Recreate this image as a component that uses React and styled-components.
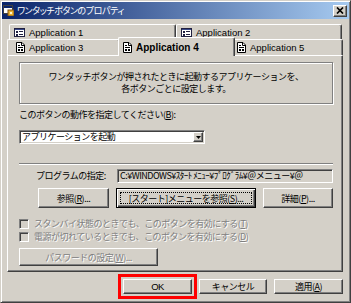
import React from 'react';
import styled, { createGlobalStyle, css } from 'styled-components';

const FACE = '#d4d0c8';
const jp = `"Noto Sans CJK JP", "Liberation Sans", sans-serif`;
const latin = `"Liberation Sans", Arial, sans-serif`;

const GlobalStyle = createGlobalStyle`
  html, body {
    margin: 0;
    padding: 0;
    background: ${FACE};
  }
  body {
    font-family: ${jp};
    font-size: 9px;
  }
`;

const raised = css`
  border: 1px solid;
  border-color: #fff #404040 #404040 #fff;
  box-shadow: inset -1px -1px #808080, inset 1px 1px ${FACE};
`;

const sunken = css`
  border: 1px solid;
  border-color: #808080 #fff #fff #808080;
  box-shadow: inset 1px 1px #404040, inset -1px -1px ${FACE};
`;

const Window = styled.div`
  box-sizing: border-box;
  width: 351px;
  height: 303px;
  background: ${FACE};
  border: 1px solid;
  border-color: ${FACE} #404040 #404040 ${FACE};
  box-shadow: inset 1px 1px #fff, inset -1px -1px #808080;
  padding: 1px;
  display: flex;
  flex-direction: column;
  overflow: hidden;
`;

const TitleBar = styled.div`
  height: 17px;
  flex: 0 0 17px;
  display: flex;
  align-items: center;
  padding: 0 2px 0 1px;
  background: linear-gradient(to right, #0a246a, #a6caf0);
`;

const TitleText = styled.span`
  flex: 1;
  margin-left: 3px;
  color: #fff;
  font-family: ${jp};
  font-size: 9px;
  letter-spacing: -0.4px;
  font-feature-settings: 'palt';
  line-height: 17px;
  white-space: nowrap;
`;

const CloseButton = styled.div`
  box-sizing: border-box;
  width: 14px;
  height: 12px;
  background: ${FACE};
  ${raised}
  display: flex;
  align-items: center;
  justify-content: center;
`;

const Tabs = styled.div`
  margin: 5px 6px 0 5px;
  display: flex;
  flex-direction: column;
`;

const TabRow = styled.div`
  display: flex;
  align-items: flex-start;
  padding-left: ${({ $indent }) => $indent || 0}px;
  margin-top: ${({ $overlap }) => ($overlap ? -1 : 0)}px;
`;

const Tab = styled.div`
  position: relative;
  box-sizing: border-box;
  width: ${({ $w }) => $w}px;
  height: 16px;
  display: flex;
  align-items: center;
  gap: 4px;
  padding-left: ${({ $pad }) => $pad}px;
  background: ${FACE};
  border-left: 1px solid #fff;
  border-top: 1px solid #fff;
  border-right: 1px solid #404040;
  box-shadow: inset -1px 0 #808080;
  border-radius: 2px 2px 0 0;
  font-family: ${latin};
  font-size: 9.5px;
  color: #000;
  white-space: nowrap;
  ${({ $active, $w, $pad }) =>
    $active &&
    css`
      z-index: 2;
      width: ${$w + 4}px;
      height: 19px;
      margin: -2px -2px -1px;
      padding-left: ${$pad + 2}px;
      font-size: 10px;
      font-weight: bold;
    `}
`;

const Panel = styled.div`
  box-sizing: border-box;
  height: 217px;
  flex: 0 0 217px;
  margin: 0 6px 0 5px;
  border: 1px solid;
  border-color: #fff #404040 #404040 #fff;
  box-shadow: inset -1px -1px #808080;
  padding: 6px 9px 0 11px;
  display: flex;
  flex-direction: column;
`;

const GroupBox = styled.div`
  box-sizing: border-box;
  height: 42px;
  border: 1px solid #808080;
  box-shadow: inset 1px 1px #fff, 1px 1px #fff;
  display: flex;
  align-items: center;
  justify-content: center;
`;

const Description = styled.p`
  margin: 0;
  font-family: ${jp};
  font-size: 9px;
  letter-spacing: -0.5px;
  line-height: 12px;
  text-align: center;
  color: #000;
`;

const Text = styled.span`
  font-family: ${jp};
  font-size: 9px;
  letter-spacing: -0.5px;
  line-height: ${({ $lh }) => $lh || 12}px;
  color: ${({ $disabled }) => ($disabled ? '#808080' : '#000')};
  text-shadow: ${({ $disabled }) => ($disabled ? '1px 1px #fff' : 'none')};
  white-space: nowrap;
`;

const Label = styled(Text)`
  display: block;
  margin-top: 5px;
`;

const Select = styled.div`
  box-sizing: border-box;
  width: 186px;
  height: 14px;
  margin-top: 9px;
  ${sunken}
  background: #fff;
  padding: 1px;
  display: flex;
  align-items: center;
  justify-content: space-between;
`;

const SelectValue = styled(Text)`
  padding-left: 1px;
  line-height: 10px;
`;

const DropButton = styled.div`
  box-sizing: border-box;
  width: 10px;
  height: 10px;
  background: ${FACE};
  ${raised}
  display: flex;
  align-items: center;
  justify-content: center;
`;

const Separator = styled.div`
  height: 1px;
  margin-top: 19px;
  background: #808080;
  border-bottom: 1px solid #fff;
`;

const ProgramRow = styled.div`
  display: flex;
  align-items: center;
  margin-top: 4px;
  height: 14px;
`;

const ProgramLabel = styled(Text)`
  flex: 0 0 98px;
  box-sizing: border-box;
  padding-left: 17px;
`;

const PathField = styled.div`
  box-sizing: border-box;
  flex: 1;
  height: 14px;
  ${sunken}
  background: ${FACE};
  padding: 0 2px;
  display: flex;
  align-items: center;
  overflow: hidden;
`;

const ButtonRow = styled.div`
  display: flex;
  justify-content: flex-end;
  gap: 7px;
  margin-top: 5px;
`;

const Button = styled.button`
  box-sizing: border-box;
  width: ${({ $w }) => $w}px;
  height: ${({ $h }) => $h || 20}px;
  padding: 0;
  margin: 0;
  background: ${FACE};
  ${raised}
  font-family: ${jp};
  font-size: 9px;
  letter-spacing: -0.5px;
  color: #000;
  display: flex;
  align-items: center;
  justify-content: center;
  cursor: default;
  white-space: nowrap;
  ${({ $default }) =>
    $default &&
    css`
      border: 1px solid #000;
      box-shadow: inset 1px 1px #fff, inset -1px -1px #404040, inset -2px -2px #808080;
    `}
  ${({ disabled }) =>
    disabled &&
    css`
      color: #808080;
      text-shadow: 1px 1px #fff;
    `}
`;

const FocusRect = styled.span`
  box-sizing: border-box;
  flex: 1;
  align-self: stretch;
  margin: 3px;
  outline: 1px dotted #000;
  outline-offset: -1px;
  display: flex;
  align-items: center;
  justify-content: center;
`;

const Checks = styled.div`
  margin-top: 9px;
  display: flex;
  flex-direction: column;
`;

const CheckRow = styled.div`
  display: flex;
  align-items: center;
  gap: 5px;
  height: 13px;
`;

const CheckBox = styled.span`
  box-sizing: border-box;
  width: 10px;
  height: 10px;
  ${sunken}
  background: ${FACE};
`;

const PasswordButton = styled(Button)`
  margin-top: 5px;
`;

const Footer = styled.div`
  display: flex;
  align-items: center;
  justify-content: flex-end;
  margin: 2px 6px 0 0;
  height: 25px;
`;

const Highlight = styled.div`
  box-sizing: border-box;
  width: 79px;
  height: 25px;
  border: 3px solid #ff0000;
  padding: 2px;
  display: flex;
`;

const FooterButton = styled(Button)`
  margin-left: ${({ $gap }) => $gap || 0}px;
  font-family: ${({ $latin }) => ($latin ? latin : jp)};
  font-size: ${({ $latin }) => ($latin ? 9.5 : 9)}px;
`;

const TitleIcon = () => (
  <svg width="11" height="11" viewBox="0 0 11 11">
    <rect x="0.5" y="0.5" width="9" height="8" fill="#fff" stroke="#404040" />
    <rect x="1" y="1" width="8" height="2" fill="#0a246a" />
    <rect x="5" y="5" width="6" height="6" fill="#e8b030" stroke="#805010" strokeWidth="1" />
    <rect x="7" y="7" width="2" height="2" fill="#fff8d0" />
  </svg>
);

const ListIcon = () => (
  <svg width="11" height="9" viewBox="0 0 11 9">
    <rect x="0.5" y="0.5" width="10" height="8" fill="#fff" stroke="#202040" />
    <rect x="1" y="1" width="9" height="1" fill="#3a4a8a" />
    <rect x="2" y="3" width="2" height="2" fill="#202040" />
    <rect x="5" y="3" width="4" height="1" fill="#202040" />
    <rect x="2" y="6" width="2" height="2" fill="#202040" />
    <rect x="5" y="6" width="4" height="1" fill="#202040" />
  </svg>
);

const DocIcon = () => (
  <svg width="9" height="11" viewBox="0 0 9 11">
    <path d="M0.5 0.5H6L8.5 3V10.5H0.5Z" fill="#fff" stroke="#000" />
    <path d="M5.5 0.5V3.5H8.5" fill="none" stroke="#000" />
    <rect x="2" y="3" width="2" height="1" fill="#000" />
    <rect x="2" y="5" width="5" height="1" fill="#000" />
    <rect x="2" y="7" width="2" height="2" fill="#000" />
    <rect x="5" y="7" width="2" height="2" fill="#000" />
  </svg>
);

const CloseGlyph = () => (
  <svg width="8" height="7" viewBox="0 0 8 7">
    <path d="M1 0.5L7 6.5M7 0.5L1 6.5" stroke="#000" strokeWidth="1.7" />
  </svg>
);

const DownArrow = () => (
  <svg width="5" height="3" viewBox="0 0 5 3">
    <path d="M0 0H5L2.5 3Z" fill="#000" />
  </svg>
);

const backTabs = [
  { label: 'Application 1', w: 167, pad: 4 },
  { label: 'Application 2', w: 166, pad: 4 },
];

const frontTabs = [
  { label: 'Application 3', w: 113, pad: 8 },
  { label: 'Application 4', w: 113, pad: 2, active: true },
  { label: 'Application 5', w: 110, pad: 3 },
];

const App = () => {
  return (
    <>
      <GlobalStyle />
      <Window>
        <TitleBar>
          <TitleIcon />
          <TitleText>ワンタッチボタンのプロパティ</TitleText>
          <CloseButton>
            <CloseGlyph />
          </CloseButton>
        </TitleBar>

        <Tabs>
          <TabRow $indent={2}>
            {backTabs.map((tab) => (
              <Tab key={tab.label} $w={tab.w} $pad={tab.pad}>
                <ListIcon />
                {tab.label}
              </Tab>
            ))}
          </TabRow>
          <TabRow $overlap>
            {frontTabs.map((tab) => (
              <Tab key={tab.label} $w={tab.w} $pad={tab.pad} $active={tab.active}>
                <DocIcon />
                {tab.label}
              </Tab>
            ))}
          </TabRow>
        </Tabs>

        <Panel>
          <GroupBox>
            <Description>
              ワンタッチボタンが押されたときに起動するアプリケーションを、
              <br />
              各ボタンごとに設定します。
            </Description>
          </GroupBox>

          <Label>
            このボタンの動作を指定してください(<u>B</u>):
          </Label>
          <Select>
            <SelectValue>アプリケーションを起動</SelectValue>
            <DropButton>
              <DownArrow />
            </DropButton>
          </Select>

          <Separator />

          <ProgramRow>
            <ProgramLabel>プログラムの指定:</ProgramLabel>
            <PathField>
              <Text $lh={12}>C:¥WINDOWS¥ｽﾀｰﾄ ﾒﾆｭｰ¥ﾌﾟﾛｸﾞﾗﾑ¥＠メニュー¥＠</Text>
            </PathField>
          </ProgramRow>

          <ButtonRow>
            <Button $w={71}>
              参照(<u>R</u>)...
            </Button>
            <Button $w={140} $default>
              <FocusRect>
                [スタート]メニューを参照(<u>S</u>)...
              </FocusRect>
            </Button>
            <Button $w={70}>
              詳細(<u>P</u>)...
            </Button>
          </ButtonRow>

          <Checks>
            <CheckRow>
              <CheckBox />
              <Text $disabled>
                スタンバイ状態のときでも、このボタンを有効にする(<u>T</u>)
              </Text>
            </CheckRow>
            <CheckRow>
              <CheckBox />
              <Text $disabled>
                電源が切れているときでも、このボタンを有効にする(<u>D</u>)
              </Text>
            </CheckRow>
          </Checks>

          <PasswordButton $w={139} $h={18} disabled>
            パスワードの設定(<u>W</u>)...
          </PasswordButton>
        </Panel>

        <Footer>
          <Highlight>
            <FooterButton $w={69} $h={15} $latin>
              OK
            </FooterButton>
          </Highlight>
          <FooterButton $w={68} $h={15} $gap={2}>
            キャンセル
          </FooterButton>
          <FooterButton $w={69} $h={15} $gap={7}>
            適用(<u>A</u>)
          </FooterButton>
        </Footer>
      </Window>
    </>
  );
};

export default App;
